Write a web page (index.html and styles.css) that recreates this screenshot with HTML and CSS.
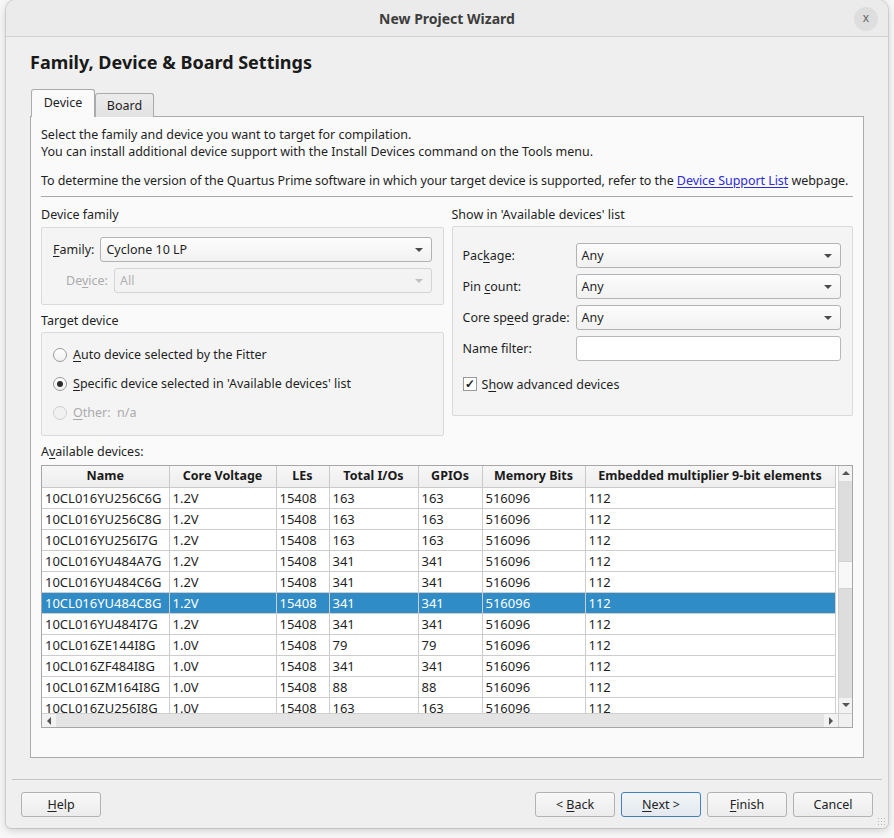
FILE: index.html
```html
<!DOCTYPE html>
<html>
<head>
<meta charset="utf-8">
<title>New Project Wizard</title>
<link rel="stylesheet" href="styles.css">
</head>
<body>
<div class="window">
  <div class="titlebar">
    <span class="title">New Project Wizard</span>
    <span class="close">x</span>
  </div>
  <div class="heading">Family, Device &amp; Board Settings</div>
  <div class="tabs">
    <div class="tab active">Device</div>
    <div class="tab">Board</div>
  </div>
  <div class="pane">
    <p class="intro">Select the family and device you want to target for compilation.<br>You can install additional device support with the Install Devices command on the Tools menu.</p>
    <p class="intro second">To determine the version of the Quartus Prime software in which your target device is supported, refer to the <span class="link">Device Support List</span> webpage.</p>
    <div class="sep"></div>
    <div class="columns">
      <div class="col left">
        <div class="glabel">Device family</div>
        <div class="group family">
          <div class="frow">
            <span class="flabel"><u>F</u>amily:</span>
            <div class="combo fcombo">Cyclone 10 LP</div>
          </div>
          <div class="frow drow">
            <span class="flabel disabled">De<u>v</u>ice:</span>
            <div class="combo dcombo disabled">All</div>
          </div>
        </div>
        <div class="glabel target">Target device</div>
        <div class="group targetgrp">
          <div class="rrow"><span class="radio"></span><span><u>A</u>uto device selected by the Fitter</span></div>
          <div class="rrow"><span class="radio checked"></span><span><u>S</u>pecific device selected in 'Available devices' list</span></div>
          <div class="rrow disabled"><span class="radio dis"></span><span><u>O</u>ther:&nbsp; n/a</span></div>
        </div>
      </div>
      <div class="col right">
        <div class="glabel">Show in 'Available devices' list</div>
        <div class="group showgrp">
          <div class="srow"><span class="slabel">Pac<u>k</u>age:</span><div class="combo scombo">Any</div></div>
          <div class="srow"><span class="slabel">Pin <u>c</u>ount:</span><div class="combo scombo">Any</div></div>
          <div class="srow"><span class="slabel">Core sp<u>e</u>ed grade:</span><div class="combo scombo">Any</div></div>
          <div class="srow"><span class="slabel">Name filter:</span><div class="input"></div></div>
          <div class="crow"><span class="check">&#10003;</span><span>S<u>h</u>ow advanced devices</span></div>
        </div>
      </div>
    </div>
    <div class="glabel avail">A<u>v</u>ailable devices:</div>
    <div class="tableframe">
      <div class="viewport">
        <table class="devices">
          <colgroup>
            <col class="c1"><col class="c2"><col class="c3"><col class="c4"><col class="c5"><col class="c6"><col class="c7">
          </colgroup>
          <thead>
            <tr><th>Name</th><th>Core Voltage</th><th>LEs</th><th>Total I/Os</th><th>GPIOs</th><th>Memory Bits</th><th>Embedded multiplier 9-bit elements</th></tr>
          </thead>
          <tbody>
            <tr><td>10CL016YU256C6G</td><td>1.2V</td><td>15408</td><td>163</td><td>163</td><td>516096</td><td>112</td></tr>
            <tr><td>10CL016YU256C8G</td><td>1.2V</td><td>15408</td><td>163</td><td>163</td><td>516096</td><td>112</td></tr>
            <tr><td>10CL016YU256I7G</td><td>1.2V</td><td>15408</td><td>163</td><td>163</td><td>516096</td><td>112</td></tr>
            <tr><td>10CL016YU484A7G</td><td>1.2V</td><td>15408</td><td>341</td><td>341</td><td>516096</td><td>112</td></tr>
            <tr><td>10CL016YU484C6G</td><td>1.2V</td><td>15408</td><td>341</td><td>341</td><td>516096</td><td>112</td></tr>
            <tr class="sel"><td>10CL016YU484C8G</td><td>1.2V</td><td>15408</td><td>341</td><td>341</td><td>516096</td><td>112</td></tr>
            <tr><td>10CL016YU484I7G</td><td>1.2V</td><td>15408</td><td>341</td><td>341</td><td>516096</td><td>112</td></tr>
            <tr><td>10CL016ZE144I8G</td><td>1.0V</td><td>15408</td><td>79</td><td>79</td><td>516096</td><td>112</td></tr>
            <tr><td>10CL016ZF484I8G</td><td>1.0V</td><td>15408</td><td>341</td><td>341</td><td>516096</td><td>112</td></tr>
            <tr><td>10CL016ZM164I8G</td><td>1.0V</td><td>15408</td><td>88</td><td>88</td><td>516096</td><td>112</td></tr>
            <tr><td>10CL016ZU256I8G</td><td>1.0V</td><td>15408</td><td>163</td><td>163</td><td>516096</td><td>112</td></tr>
          </tbody>
        </table>
      </div>
      <div class="vscroll">
        <div class="sbtn up"></div>
        <div class="vtrack t1"></div>
        <div class="vthumb"></div>
        <div class="vtrack t2"></div>
        <div class="sbtn down"></div>
      </div>
      <div class="hscroll">
        <div class="sbtn leftb"></div>
        <div class="htrack"></div>
        <div class="sbtn rightb"></div>
      </div>
      <div class="corner"></div>
    </div>
  </div>
  <div class="bottomsep"></div>
  <div class="buttons">
    <div class="btn"><u>H</u>elp</div>
    <div class="spacer"></div>
    <div class="btn">&lt; <u>B</u>ack</div>
    <div class="btn default"><u>N</u>ext &gt;</div>
    <div class="btn"><u>F</u>inish</div>
    <div class="btn">Cancel</div>
  </div>
  <div class="grip"></div>
</div>
</body>
</html>
```
FILE: styles.css
```css
* { box-sizing: border-box; }
html, body { margin: 0; padding: 0; }
body {
  width: 894px;
  height: 838px;
  overflow: hidden;
  background: #f7f7f7;
  font-family: "Noto Sans", "Open Sans", sans-serif;
  font-size: 12.5px;
  color: #1f1f1f;
}
u { text-decoration: underline; text-underline-offset: 2px; }

.window {
  margin-left: 6px;
  width: 882px;
  height: 828px;
  background: #efefef;
  border-radius: 10px 10px 5px 5px;
  box-shadow: 0 0 0 1px rgba(0,0,0,0.10), 0 2px 8px rgba(0,0,0,0.18);
  display: flex;
  flex-direction: column;
  position: relative;
}

.titlebar {
  height: 37px;
  flex: none;
  border-bottom: 1px solid #d2d2d2;
  background: #ebebeb;
  border-radius: 10px 10px 0 0;
  display: flex;
  align-items: center;
  justify-content: center;
  position: relative;
}
.title { font-weight: bold; font-size: 14px; color: #3d3d3d; }
.close {
  position: absolute;
  right: 10px;
  top: 7px;
  width: 24px;
  height: 24px;
  border-radius: 50%;
  background: #dedede;
  color: #666;
  font-size: 12px;
  line-height: 22px;
  text-align: center;
}

.heading {
  margin: 13px 0 0 24px;
  line-height: 24px;
  font-size: 18px;
  font-weight: bold;
  color: #1a1a1a;
}

.tabs {
  margin: 15px 0 -1px 25px;
  height: 28px;
  display: flex;
  align-items: flex-end;
  position: relative;
  z-index: 2;
}
.tab {
  height: 24px;
  width: 59px;
  border: 1px solid #ababab;
  border-bottom: none;
  border-radius: 3px 3px 0 0;
  background: linear-gradient(#ececec, #e2e2e2);
  text-align: center;
  line-height: 23px;
}
.tab.active {
  height: 28px;
  width: 64px;
  background: #fafafa;
  line-height: 26px;
}

.pane {
  margin-left: 24px;
  width: 834px;
  height: 642px;
  flex: none;
  border: 1px solid #ababab;
  background: #fafafa;
  padding: 9px 10px 0 10px;
  position: relative;
  z-index: 1;
}
.intro { margin: 0; line-height: 17px; white-space: nowrap; }
.intro.second { margin-top: 12px; letter-spacing: -0.06px; }
.link { color: #2b2bdc; text-decoration: underline; text-underline-offset: 2px; }
.sep { height: 1px; background: #a9a9a9; margin-top: 7px; }

.columns { display: flex; gap: 8px; }
.col { width: 403px; }
.col.right { width: 402px; }
.glabel { line-height: 17px; margin-top: 9px; }
.glabel.target { margin-top: 7px; }
.glabel.avail { margin-top: 7px; }

.group {
  border: 1px solid #dadada;
  background: #f4f4f4;
  border-radius: 2px;
}
.group.family {
  margin-top: 4px;
  height: 78px;
  padding: 9px 11px 0 11px;
}
.frow { display: flex; align-items: center; gap: 6px; height: 25px; }
.drow { margin-top: 6px; padding-left: 13px; }
.flabel { white-space: nowrap; }
.combo {
  flex: 1;
  height: 25px;
  border: 1px solid #b3b3b3;
  border-radius: 3px;
  background: linear-gradient(#fdfdfd, #f1f1f1);
  padding-left: 5px;
  line-height: 23px;
  position: relative;
}
.combo::after {
  content: "";
  position: absolute;
  right: 8px;
  top: 10px;
  border-left: 4px solid transparent;
  border-right: 4px solid transparent;
  border-top: 4px solid #4a4a4a;
}
.combo.disabled { border-color: #d4d4d4; color: #b2b2b2; background: #f3f3f3; }
.combo.disabled::after { border-top-color: #c0c0c0; }
.disabled { color: #ababab; }

.group.targetgrp {
  margin-top: 3px;
  height: 104px;
  padding: 7px 11px 0 11px;
}
.rrow { height: 29px; display: flex; align-items: center; gap: 6px; }
.radio {
  width: 14px;
  height: 14px;
  border-radius: 50%;
  border: 1px solid #9a9a9a;
  background: linear-gradient(#ffffff, #f0f0f0);
  position: relative;
  flex: none;
}
.radio.checked::after {
  content: "";
  position: absolute;
  left: 3px;
  top: 3px;
  width: 6px;
  height: 6px;
  border-radius: 50%;
  background: #2c2c2c;
}
.radio.dis { border-color: #cfcfcf; background: #f1f1f1; }

.group.showgrp {
  margin-top: 3px;
  height: 190px;
  padding: 16px 11px 0 10px;
}
.srow { display: flex; align-items: center; height: 25px; margin-bottom: 6px; }
.slabel { width: 113px; flex: none; white-space: nowrap; }
.input {
  flex: 1;
  height: 25px;
  border: 1px solid #b8b8b8;
  border-radius: 3px;
  background: #ffffff;
}
.crow { display: flex; align-items: center; gap: 5px; height: 20px; margin-top: 13px; }
.check {
  width: 14px;
  height: 14px;
  border: 1px solid #9a9a9a;
  background: #ffffff;
  font-size: 12px;
  line-height: 12px;
  text-align: center;
  color: #1a1a1a;
  font-weight: bold;
  flex: none;
}

.tableframe {
  margin-top: 5px;
  width: 812px;
  height: 263px;
  border: 1px solid #a6a6a6;
  background: #ffffff;
  display: grid;
  grid-template-columns: 796px 14px;
  grid-template-rows: 247px 14px;
}
.viewport { overflow: hidden; background: #ffffff; }
.devices {
  border-collapse: collapse;
  table-layout: fixed;
  width: 793px;
}
.c1 { width: 127px; } .c2 { width: 107px; } .c3 { width: 53px; } .c4 { width: 89px; }
.c5 { width: 64px; } .c6 { width: 103px; } .c7 { width: 250px; }
.devices th {
  height: 21px;
  padding: 0;
  line-height: 18px;
  font-weight: bold;
  text-align: center;
  background: linear-gradient(#f7f7f7, #ededed);
  border-right: 1px solid #c9c9c9;
  border-bottom: 1px solid #c9c9c9;
  white-space: nowrap;
  overflow: hidden;
  color: #1a1a1a;
}
.devices td {
  height: 21px;
  padding: 0 0 0 3px;
  font-size: 13px;
  line-height: 18px;
  border-right: 1px solid #cdcdcd;
  border-bottom: 1px solid #cdcdcd;
  white-space: nowrap;
  overflow: hidden;
}
.devices tr.sel td { background: #308cc6; color: #ffffff; }

.vscroll {
  display: flex;
  flex-direction: column;
  border-left: 1px solid #d0d0d0;
  background: #dedede;
}
.sbtn { background: #f2f2f2; position: relative; flex: none; }
.vscroll .sbtn { height: 15px; }
.sbtn::after { content: ""; position: absolute; }
.sbtn.up::after {
  left: 3px; top: 5px;
  border-left: 4px solid transparent; border-right: 4px solid transparent;
  border-bottom: 4px solid #555;
}
.sbtn.down::after {
  left: 3px; top: 5px;
  border-left: 4px solid transparent; border-right: 4px solid transparent;
  border-top: 4px solid #555;
}
.vtrack { background: #dddddd; }
.vtrack.t1 { height: 80px; }
.vthumb { height: 28px; background: #f8f8f8; border-top: 1px solid #d2d2d2; border-bottom: 1px solid #d2d2d2; }
.vtrack.t2 { flex: 1; }
.hscroll {
  display: flex;
  border-top: 1px solid #d0d0d0;
  background: #e3e3e3;
}
.hscroll .sbtn { width: 14px; }
.sbtn.leftb::after {
  left: 5px; top: 3px;
  border-top: 4px solid transparent; border-bottom: 4px solid transparent;
  border-right: 4px solid #555;
}
.sbtn.rightb::after {
  left: 5px; top: 3px;
  border-top: 4px solid transparent; border-bottom: 4px solid transparent;
  border-left: 4px solid #555;
}
.htrack { flex: 1; background: #e4e4e4; }
.corner { background: #f0f0f0; border-top: 1px solid #d0d0d0; border-left: 1px solid #d0d0d0; }

.bottomsep {
  margin: 21px 6px 0 6px;
  height: 1px;
  background: #c4c4c4;
  flex: none;
}
.buttons {
  margin-top: 12px;
  padding: 0 15px 0 15px;
  display: flex;
  gap: 6px;
  height: 25px;
}
.spacer { flex: 1; }
.btn {
  width: 80px;
  height: 25px;
  border: 1px solid #b2b2b2;
  border-radius: 3px;
  background: linear-gradient(#f8f8f8, #ececec);
  text-align: center;
  line-height: 23px;
  color: #222;
}
.btn.default {
  border-color: #3f7fbf;
  background: linear-gradient(#f2f5f8, #e3e9ef);
}
.grip {
  position: absolute;
  right: 3px;
  bottom: 3px;
  width: 8px;
  height: 8px;
  background-image: radial-gradient(circle, #b8b8b8 0.8px, transparent 1px);
  background-size: 3px 3px;
}
```
